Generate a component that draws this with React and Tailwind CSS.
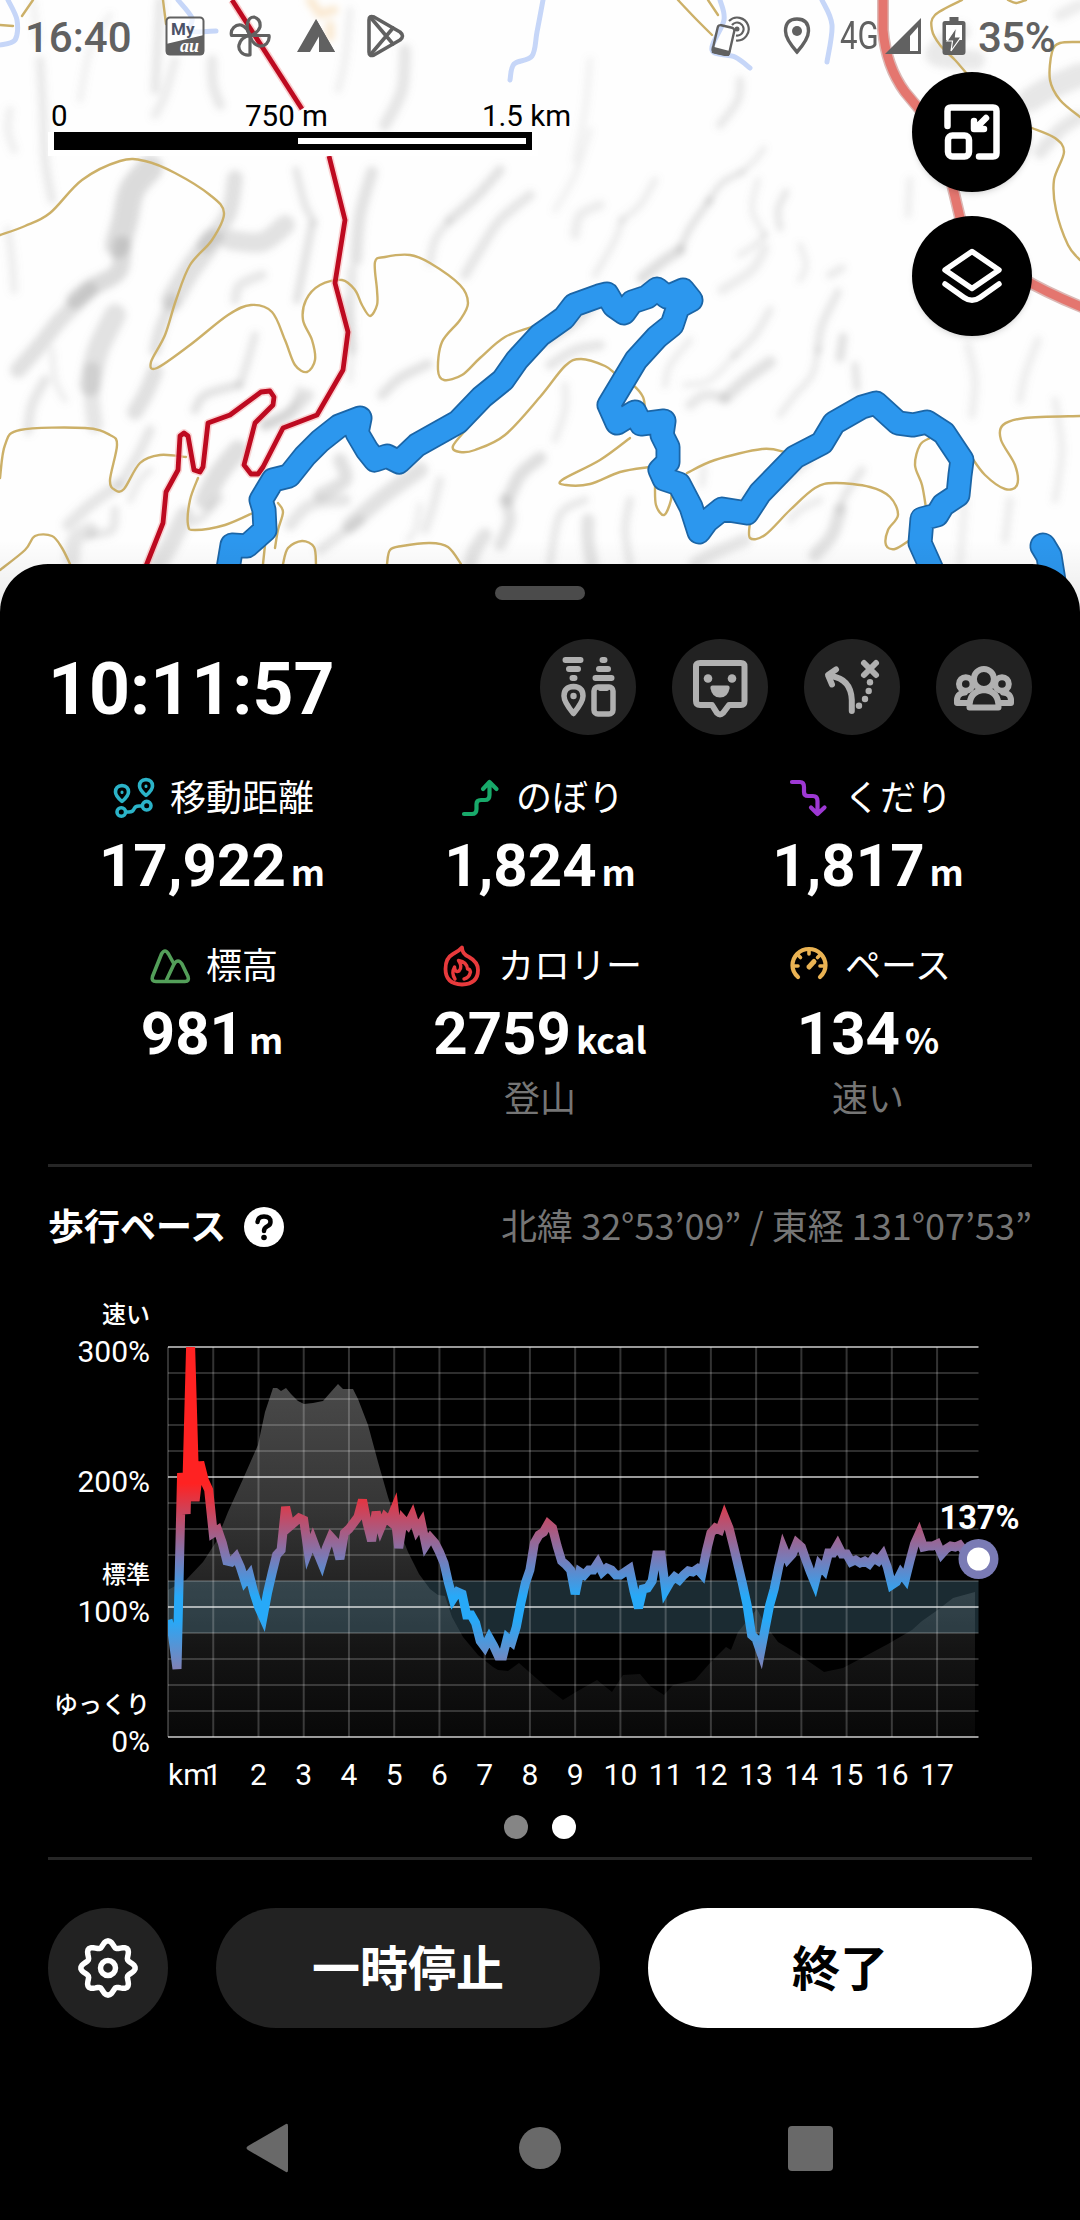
import { useId } from "react";

const CONTOURS = [
  "0,235 25,226 50,213 82,180 120,161 145,161 175,173 210,195 224,213 212,240 190,265 176,300 165,335 151,362 157,368 190,345 228,315 251,305 272,312 285,340 295,365 307,372 315,360 312,340 303,320 306,300 320,285 342,280 355,290 362,305 370,316 377,305 377,290 375,262 385,257 410,255 430,263 460,285 468,303 460,320 442,342 438,370 444,380 462,375 480,358 505,337 535,326",
  "0,478 5,445 20,430 85,428 110,435 117,445 110,480 115,490 124,489 140,463 160,455 186,457",
  "198,478 190,500 188,525 195,530 225,525 255,512",
  "278,503 283,512 278,530 275,548",
  "0,570 25,550 35,536 52,536 62,548 70,564",
  "265,545 263,564",
  "283,564 288,548 302,541 314,547 316,564",
  "387,564 390,550 402,546 430,543 448,547 461,564",
  "490,400 470,425 453,446 460,452 475,450 505,435 540,397 565,366 581,359 605,366 617,375 633,385 643,397 645,410",
  "630,438 600,460 562,480 566,485 590,484 620,472 650,467",
  "655,485 656,505 664,515 671,500 671,488",
  "687,473 715,460 762,449 785,452",
  "750,522 750,538 765,535 790,510 815,488 835,483 870,487 890,497 898,515 888,530 886,545 895,549 910,540",
  "930,438 920,445 915,465 922,485 926,508",
  "970,455 985,475 1005,489 1017,485 1015,465 1001,440 1003,425 1025,418 1080,416",
  "678,0 695,18 712,35",
  "708,0 718,15",
  "962,0 935,15 932,30 940,45 955,60 967,74",
  "1008,0 1016,3 1026,0",
  "1080,42 1060,43 1052,52 1050,80 1060,100 1080,117",
  "1032,128 1055,138 1064,152 1054,180 1056,210 1068,245 1080,260",
  "163,0 166,24",
  "33,0 22,16",
  "0,25 13,26",
];

const RIVERS = [
  "8,0 17,20 15,40 0,45",
  "178,0 192,18 190,31 216,31",
  "543,0 537,32 532,56 514,64 510,80",
  "720,0 724,20 712,50 735,57 750,68",
  "822,0 832,25 827,62",
];

// hill shade strokes: [width, opacity, points]
const SHADES = [
  [26, 0.3, "150,168 132,190 125,220 118,245"],
  [18, 0.3, "122,245 118,272 90,288 75,300"],
  [16, 0.26, "235,178 228,215 205,245"],
  [22, 0.26, "212,240 190,270 172,300"],
  [12, 0.24, "172,300 160,330 155,350"],
  [20, 0.24, "285,225 262,242 230,240"],
  [10, 0.2, "262,275 240,285 235,300"],
  [12, 0.24, "372,172 360,215 356,260"],
  [10, 0.2, "352,270 350,320 352,350"],
  [7, 0.24, "296,170 305,205 314,222"],
  [8, 0.26, "312,225 306,255 297,300"],
  [10, 0.24, "500,170 478,195 450,220"],
  [8, 0.2, "448,222 435,240 430,262"],
  [10, 0.22, "530,195 500,220 480,250 465,275"],
  [9, 0.2, "160,0 158,40 155,90"],
  [9, 0.16, "175,60 165,95 155,115"],
  [10, 0.2, "212,60 213,85 220,105"],
  [12, 0.22, "405,50 402,90 385,125"],
  [7, 0.14, "350,10 345,60 338,90"],
  [9, 0.18, "40,60 43,110 45,160 52,200"],
  [6, 0.14, "33,0 38,40"],
  [8, 0.14, "10,110 8,130 14,150"],
  [8, 0.15, "8,230 12,260 14,290"],
  [6, 0.14, "110,15 90,50 80,100"],
  [16, 0.26, "90,290 60,320 40,345 18,370"],
  [22, 0.25, "115,315 98,350 90,385"],
  [16, 0.22, "92,370 92,400 95,425"],
  [10, 0.22, "45,380 32,405 28,430"],
  [6, 0.16, "52,350 55,380 65,400"],
  [16, 0.26, "155,372 145,395 135,412"],
  [8, 0.22, "255,335 248,360 240,385"],
  [9, 0.24, "238,385 205,395 195,410"],
  [8, 0.2, "300,390 290,410 265,425"],
  [10, 0.22, "150,430 138,455 120,485"],
  [12, 0.22, "118,485 90,505 68,525"],
  [9, 0.2, "115,510 112,530 90,535"],
  [7, 0.18, "150,470 140,480 130,500"],
  [16, 0.22, "90,530 75,540 72,560"],
  [18, 0.24, "185,515 170,545 158,564"],
  [20, 0.28, "238,450 218,475 205,500"],
  [8, 0.22, "220,498 205,515 195,522"],
  [12, 0.24, "308,395 288,415 265,425"],
  [10, 0.24, "428,364 400,378 382,395"],
  [6, 0.16, "345,300 352,340 350,380"],
  [14, 0.26, "340,460 345,480 320,495"],
  [16, 0.25, "420,470 385,495 350,525"],
  [12, 0.22, "345,500 310,505 290,525"],
  [10, 0.22, "360,520 340,535 320,550"],
  [9, 0.18, "440,480 432,510 425,530"],
  [6, 0.16, "420,505 415,530 408,540"],
  [13, 0.28, "540,458 520,475 508,500"],
  [12, 0.24, "505,500 510,520 500,545"],
  [14, 0.24, "485,535 475,550 470,564"],
  [14, 0.24, "595,300 575,320 545,340"],
  [10, 0.22, "600,345 575,350 550,365"],
  [11, 0.28, "642,278 662,262 680,250"],
  [7, 0.26, "680,250 690,228 710,200"],
  [6, 0.24, "708,202 722,183 742,172"],
  [5, 0.2, "742,172 755,160 764,148"],
  [10, 0.16, "575,235 580,215 600,205"],
  [7, 0.17, "595,275 615,240 622,220"],
  [7, 0.16, "622,220 640,205 655,180"],
  [6, 0.13, "555,210 575,175 590,130"],
  [6, 0.12, "590,60 585,110 575,160"],
  [8, 0.2, "740,80 738,100 720,125"],
  [6, 0.16, "758,180 752,210 765,235"],
  [7, 0.22, "786,192 778,210 780,228"],
  [6, 0.18, "765,235 755,245 740,255"],
  [10, 0.16, "765,248 752,270 722,290"],
  [6, 0.17, "800,245 806,265 800,280"],
  [12, 0.24, "770,362 745,380 725,398"],
  [10, 0.2, "725,398 705,395 690,405"],
  [8, 0.22, "838,292 822,325 818,350"],
  [6, 0.2, "818,350 812,375 795,395 780,415"],
  [9, 0.26, "843,337 840,358"],
  [7, 0.24, "855,365 857,388"],
  [8, 0.18, "770,310 755,335 735,355"],
  [6, 0.17, "735,355 710,380 685,385"],
  [7, 0.16, "690,340 670,365 665,385"],
  [7, 0.17, "565,385 565,410 555,440"],
  [8, 0.22, "862,470 845,495 840,510"],
  [13, 0.26, "840,510 832,535 815,555"],
  [7, 0.18, "820,500 800,510 790,520"],
  [6, 0.18, "704,468 702,485"],
  [10, 0.2, "808,460 775,485 745,500"],
  [13, 0.22, "745,540 710,555 695,564"],
  [13, 0.24, "588,520 588,540 592,564"],
  [8, 0.2, "585,500 560,515 550,564"],
  [8, 0.2, "630,500 625,530 630,564"],
  [8, 0.15, "968,345 975,380 972,415"],
  [8, 0.15, "1038,340 1025,375 1020,400"],
  [7, 0.16, "1055,400 1062,450 1055,500"],
  [8, 0.16, "1010,500 1005,540"],
  [8, 0.14, "965,500 960,564"],
  [7, 0.15, "910,180 908,215"],
  [8, 0.18, "842,268 830,275"],
  [24, 0.2, "1080,75 1050,88 1030,100"],
  [20, 0.18, "960,32 935,55 975,60"],
  [14, 0.2, "1078,118 1060,130 1040,152"],
  [12, 0.16, "1080,5 1060,15"],
];

const TRAIL_TOP = "232,0 302,109";
const TRAIL =
  "329,156 345,220 335,283 348,332 343,370 317,415 283,428 263,467 258,474 251,474 244,465 255,423 273,405 274,397 270,391 261,392 230,415 208,423 203,467 200,472 194,470 188,436 184,433 180,436 178,470 166,492 163,523 146,566";

const TRACK =
  "227,575 232,545 247,546 265,530 264,510 261,500 273,480 289,476 305,456 320,441 339,426 360,418 357,433 367,450 375,460 387,456 399,462 417,445 458,422 482,397 503,380 517,360 540,335 550,328 564,318 574,305 599,296 607,294 614,306 624,313 632,302 647,297 657,289 667,297 683,290 691,300 678,307 672,325 657,337 636,360 609,405 617,423 635,412 641,424 664,421 662,435 668,447 668,462 660,470 664,479 679,484 691,507 699,532 707,521 722,509 747,513 760,493 795,457 822,443 834,423 862,407 876,403 898,423 913,425 927,422 944,433 962,460 960,475 958,495 943,505 937,515 922,519 920,543 933,572";

// heights above the 0% line, one sample per 0.1 km (130 units = 100%)
const PACE = [
  117, 102, 68, 264, 223, 391, 236, 275, 257, 247, 204, 207, 194, 176, 175, 180, 170, 156, 162, 144, 130, 120, 144, 164,
  182, 187, 230, 211, 215, 219, 217, 185, 197, 185, 174, 189, 200, 195, 178, 204, 208, 214, 220, 237, 214, 196, 225, 209,
  220, 216, 227, 189, 217, 212, 221, 207, 214, 192, 199, 194, 185, 174, 154, 138, 145, 143, 122, 122, 114, 96, 90, 99, 91,
  81, 81, 99, 95, 110, 134, 154, 167, 194, 202, 205, 213, 209, 191, 176, 172, 167, 143, 165, 162, 167, 167, 174, 165, 169,
  167, 162, 162, 165, 168, 146, 129, 148, 149, 156, 182, 182, 147, 155, 160, 157, 162, 166, 165, 168, 163, 186, 204, 209,
  207, 220, 209, 191, 172, 153, 132, 102, 98, 85, 109, 132, 148, 170, 189, 178, 183, 194, 190, 177, 165, 154, 172, 167,
  184, 184, 192, 183, 183, 175, 177, 174, 176, 173, 179, 176, 182, 170, 152, 155, 164, 158, 176, 193, 203, 190, 191, 191,
  193, 183, 188, 191, 190, 192, 186, 182, 180, 178,
];

const ELEVATION =
  "0,147 18,157 35,175 48,195 60,225 75,258 90,292 97,325 105,349 109,349 113,346 118,349 123,343 130,336 136,333 145,334 155,336 162,344 170,353 175,348 185,348 190,338 200,312 210,275 220,240 230,210 240,185 251,163 262,148 270,142 277,141 284,120 295,100 310,82 325,70 330,67 340,66 351,74 368,59 381,48 395,37 408,45 429,57 444,45 455,62 472,63 482,51 496,42 505,52 527,57 542,74 558,90 563,87 570,105 589,128 596,114 610,95 630,83 656,65 675,69 692,78 720,93 744,107 754,116 771,128 785,139 807,145";

const PLOT = { left: 120, top: 57, width: 810.5, height: 390, km: 45.24 };
const BASE = PLOT.top + PLOT.height;

// Catmull-Rom spline through the given points
const smooth = (points) => {
  const p = points.split(" ").map((s) => s.split(",").map(Number));
  let d = `M${p[0]}`;
  for (let i = 0; i < p.length - 1; i++) {
    const a = p[i - 1] || p[i];
    const b = p[i];
    const c = p[i + 1];
    const e = p[i + 2] || c;
    d += `C${b[0] + (c[0] - a[0]) / 6},${b[1] + (c[1] - a[1]) / 6} ${c[0] - (e[0] - b[0]) / 6},${c[1] - (e[1] - b[1]) / 6} ${c}`;
  }
  return d;
};

const ROAD = "M883 -4V30Q886 66 905 92L930 122M951 180L962 226M1020 277Q1045 292 1084 308";

const MapView = () => (
  <svg viewBox="0 0 1080 620" className="absolute inset-0 h-[620px] w-[1080px] bg-[#fefefe]">
    <defs>
      <filter id="shade" filterUnits="userSpaceOnUse" x="-20" y="-20" width="1120" height="660">
        <feGaussianBlur stdDeviation="3.6" />
      </filter>
      <linearGradient id="edge" x1="0" x2="0" y1="0" y2="1">
        <stop offset="0" stopColor="#000" stopOpacity="0" />
        <stop offset="1" stopColor="#000" stopOpacity="0.09" />
      </linearGradient>
    </defs>
    <g fill="none" strokeLinecap="round" strokeLinejoin="round">
      <g filter="url(#shade)">
        {SHADES.map(([width, opacity, points]) => (
          <path key={points} d={smooth(points)} stroke="#8c8c8c" strokeWidth={width} strokeOpacity={opacity} />
        ))}
        <path d="M310 0l10 14 14-4M330 25v12" stroke="#f8dfbd" strokeWidth="9" strokeOpacity="0.7" />
      </g>
      {RIVERS.map((points) => (
        <path key={points} d={smooth(points)} stroke="#c6d6f8" strokeWidth="5" />
      ))}
      {CONTOURS.map((points) => (
        <path key={points} d={smooth(points)} stroke="#ccb068" strokeWidth="2.4" />
      ))}
      {/* Main road */}
      <path d={ROAD} stroke="#b9716c" strokeWidth="12" strokeLinecap="butt" strokeOpacity="0.5" />
      <path d={ROAD} stroke="#e4766f" strokeWidth="9" strokeLinecap="butt" />
      {/* Hiking trail */}
      <g strokeLinecap="butt">
        <polyline points={TRAIL_TOP} stroke="#f6b9b9" strokeWidth="8" strokeOpacity="0.7" />
        <polyline points={TRAIL} stroke="#f6b9b9" strokeWidth="8" strokeOpacity="0.6" />
        <polyline points={TRAIL_TOP} stroke="#bd0a20" strokeWidth="4.8" />
        <polyline points={TRAIL} stroke="#bd0a20" strokeWidth="4.8" />
      </g>
      {/* Recorded track */}
      <polyline points={TRACK} stroke="#1b65a6" strokeWidth="25" />
      <polyline points="1043,546 1049,556 1056,600" stroke="#1b65a6" strokeWidth="27" />
      <polyline points={TRACK} stroke="#2c97ee" strokeWidth="21.5" />
      <polyline points="1043,546 1049,556 1056,600" stroke="#2c97ee" strokeWidth="23.5" />
    </g>
    <rect y="540" width="1080" height="80" fill="url(#edge)" />
  </svg>
);

const MyAuIcon = () => (
  <svg viewBox="0 0 40 40" className="h-10 w-10">
    <rect x="1.5" y="1.5" width="37" height="37" rx="3.5" fill="#fff" fillOpacity="0.7" stroke="#616161" strokeWidth="2" />
    <path d="M1 28L39 19V36Q39 39 36 39H4Q1 39 1 36Z" fill="#616161" />
    <text x="6" y="19" fontSize="17" fontWeight="700" fill="#4d5368" fontFamily="Roboto, sans-serif">My</text>
    <text x="15" y="36" fontSize="18" fontWeight="700" fontStyle="italic" fill="#fff" fontFamily="Liberation Serif, serif">au</text>
  </svg>
);

const FanIcon = () => (
  <svg viewBox="0 0 42 42" className="h-[42px] w-[42px]" fill="none" stroke="#616161" strokeWidth="3.2" strokeLinejoin="round">
    <path d="M21 20.5C16 13 18 2 25 2Q32 4 31 12Q29 18 21 20.5Z" />
    <path d="M21 20.5H2.500C1 14 7 9 12 10Q18 12 21 20.5Z" />
    <path d="M21 20.500V40C13 41 9 35 10 30Q12 22 21 20.500Z" />
    <path d="M21 20.500H40C41 27 36 32 30 31Q23 29 21 20.500Z" />
  </svg>
);

const PlayIcon = () => (
  <svg viewBox="0 0 40 44" className="h-11 w-10" fill="none" stroke="#616161" strokeWidth="3.600" strokeLinejoin="round" strokeLinecap="round">
    <path d="M3 6Q3 1 8 3L34 18Q39 22 34 26L8 41Q3 43 3 38Z" />
    <path d="M5 4L27 30M5 40L27 14" />
  </svg>
);

const StatusBar = () => (
  <div className="absolute inset-x-0 top-0 flex h-[72px] items-center pl-[25px] pr-[24px] font-['Roboto',sans-serif] text-[#616161]">
    <span className="w-[140px] pt-[3px] text-[42px] leading-none font-medium">16:40</span>
    <MyAuIcon />
    <div className="ml-[24px]"><FanIcon /></div>
    <svg viewBox="0 0 40 36" className="ml-[25px] h-9 w-10">
      <path d="M20 1L39 34H25V15L14 34H1Z" fill="#616161" />
      <path d="M20 1L39 34H23V14Z" fill="#616161" />
    </svg>
    <div className="ml-[30px]"><PlayIcon /></div>
    <div className="ml-auto flex items-center">
      <svg viewBox="0 0 40 40" className="mr-[33px] h-10 w-10" fill="none" stroke="#616161" strokeWidth="2.400">
        <rect x="5" y="10" width="17" height="28" rx="3" transform="rotate(13 13 24)" />
        <path d="M3 32L19 36L18 39L3 36Z" fill="#616161" />
        <circle cx="27" cy="13" r="2.500" fill="#616161" stroke="none" />
        <path d="M22 9A6.500 6.500 0 1 1 26 19.500M19 5A11.500 11.500 0 1 1 26 24.500" strokeWidth="2.200" />
      </svg>
      <svg viewBox="0 0 28 38" className="mr-[29px] h-[38px] w-7">
        <path d="M14 2Q25.500 2 25.500 14Q25.500 22 14 35Q2.500 22 2.500 14Q2.500 2 14 2Z" fill="none" stroke="#616161" strokeWidth="3.400" />
        <circle cx="14" cy="14" r="5" fill="#616161" />
      </svg>
      <span className="mr-[6px] w-[38px] origin-left scale-x-[0.82] text-[38px] leading-none whitespace-nowrap">4G</span>
      <svg viewBox="0 0 38 38" className="mr-[20px] h-[38px] w-[38px]">
        <path d="M1 37L37 1V37Z" fill="#616161" />
        <path d="M26 19L34 10V34H26Z" fill="#fff" />
      </svg>
      <svg viewBox="0 0 24 40" className="mr-[12px] h-10 w-6">
        <path d="M7.500 1H16.500V5H21Q23.500 5 23.500 7.500V36Q23.500 39 20.500 39H3.500Q0.500 39 0.500 36V7.500Q0.500 5 3 5H7.500Z" fill="#616161" />
        <path d="M4 9H20V24H4Z" fill="#fff" />
        <path d="M14.500 11L5 25H10.500L9 35L19 21H13.500Z" fill="#616161" stroke="#fff" strokeWidth="1.200" />
      </svg>
      <span className="w-[78px] origin-left pt-[3px] text-[42px] leading-none font-medium tracking-[-0.5px] whitespace-nowrap">35%</span>
    </div>
  </div>
);

const ScaleBar = () => (
  <div className="absolute left-[48px] top-[98px] w-[540px] font-['Roboto',sans-serif] text-[29.500px] leading-[36px] text-black">
    <div className="flex h-[34px] [text-shadow:0_0_4px_#fff]">
      <span className="w-[197px] pl-[3px]">0</span>
      <span className="w-[237px]">750 m</span>
      <span>1.5 km</span>
    </div>
    <div className="w-[490px] bg-white pb-1.5 pl-1.5">
      <div className="flex h-[18px] w-[478px] bg-black py-[6px] pr-[6px] pl-[244px]">
        <div className="flex-1 bg-white" />
      </div>
    </div>
  </div>
);

const MapButtons = () => (
  <div className="absolute right-[48px] top-[72px] flex flex-col gap-6">
    <button className="flex h-[120px] w-[120px] items-center justify-center rounded-full bg-black shadow-md">
      <svg viewBox="0 0 60 60" className="h-[60px] w-[60px]" fill="none" stroke="#fff" strokeWidth="6.500" strokeLinecap="round" strokeLinejoin="round">
        <path d="M5.500 24V9Q5.500 5.500 9 5.500H51Q54.500 5.500 54.500 9V51Q54.500 54.500 51 54.500H37" />
        <rect x="6" y="33.500" width="21" height="21" rx="4.500" />
        <path d="M44 16L35 25M32 19V27H42" strokeWidth="6.500" />
      </svg>
    </button>
    <button className="flex h-[120px] w-[120px] items-center justify-center rounded-full bg-black shadow-md">
      <svg viewBox="0 0 60 60" className="h-[60px] w-[60px]" fill="none" stroke="#fff" strokeWidth="5.500" strokeLinecap="round" strokeLinejoin="round">
        <path d="M30 5.500L57 24L30 42.500L3 24Z" />
        <path d="M3 38L22 51.500Q30 57 38 51.500L57 38" />
      </svg>
    </button>
  </div>
);

const RoundAction = ({ children }) => (
  <button className="h-24 w-24 rounded-full bg-[#222]">
    <svg viewBox="0 0 96 96" className="h-24 w-24" fill="none" stroke="#b0b0b0" strokeWidth="6" strokeLinecap="round" strokeLinejoin="round">
      {children}
    </svg>
  </button>
);

const Actions = () => (
  <div className="flex gap-9">
    <RoundAction>
      <path d="M25.500 21H40.500M29 30H38M32.500 39H34.500M62.500 21H64.500M59 30H68M55.500 39H71.500" />
      <path d="M33.500 47.500Q43 48 43 57Q43 63 33.500 74.500Q24 63 24 57Q24 48 33.500 47.500Z" strokeWidth="5.500" />
      <circle cx="33.500" cy="57" r="3.200" fill="#b0b0b0" stroke="none" />
      <rect x="54" y="48" width="19" height="27" rx="4" strokeWidth="5.500" />
      <path d="M60 50H67" strokeWidth="4" />
    </RoundAction>
    <RoundAction>
      <path d="M28 24H69Q72.500 24 72.500 27.500V62Q72.500 66 69 66H57L51 74Q48 77 45 74L40 66H28Q24 66 24 62V27.500Q24 24 28 24Z" />
      <circle cx="36" cy="39.500" r="4.300" fill="#b0b0b0" stroke="none" />
      <circle cx="60" cy="39.500" r="4.300" fill="#b0b0b0" stroke="none" />
      <path d="M40.500 46.500H55.500Q58 46.500 57.500 49.500Q56 58.500 48 58.500Q40 58.500 38.500 49.500Q38 46.500 40.500 46.500Z" fill="#b0b0b0" stroke="none" />
    </RoundAction>
    <RoundAction>
      <path d="M47.800 72V61Q47 40 27 37" />
      <path d="M32 30.500L24 36L28 45.500" />
      <path d="M60 24L72 36M72 24L60 36" />
      <g fill="#b0b0b0" stroke="none">
        <circle cx="66" cy="43.300" r="3.200" />
        <circle cx="64.700" cy="52" r="3.200" />
        <circle cx="61" cy="60" r="3.200" />
        <circle cx="55" cy="66.700" r="3.200" />
      </g>
    </RoundAction>
    <RoundAction>
      <circle cx="29.800" cy="45" r="6.800" />
      <circle cx="66" cy="45" r="6.800" />
      <path d="M32 64H21Q20 54 29 53.500M64 64H75Q76 54 67 53.500" />
      <circle cx="47.900" cy="40" r="10" />
      <path d="M33.500 68.500Q33 52 48 51Q63 52 62.500 68.500Z" fill="#222" />
    </RoundAction>
  </div>
);

const DistanceIcon = () => (
  <g stroke="#2bb3c8" strokeWidth="3.600">
    <path d="M12 11.500Q18.500 12 18.500 18Q18.500 22 12 27.500Q5.500 22 5.500 18Q5.500 12 12 11.500Z" />
    <path d="M36 5.500Q42.500 6 42.500 12Q42.500 16 36 21.500Q29.500 16 29.500 12Q29.500 6 36 5.500Z" />
    <path d="M12 18v.5M36 12v.5" strokeWidth="3" />
    <circle cx="11.300" cy="38" r="4.300" />
    <circle cx="36.700" cy="31.700" r="4.300" />
    <path d="M16 38H19Q23 38 24 35Q25 32 29 32H32" />
  </g>
);

const AscentIcon = () => (
  <path d="M8 40H16Q20.500 40 20.500 35V30Q20.500 26 25 26H29Q33.500 26 33.500 21V8M27 15L33.500 8L40.500 15" stroke="#18a96a" strokeWidth="4.200" />
);

const DescentIcon = () => (
  <path d="M8 8H16Q20 8 20 13V18Q20 22 24 22H29Q33.500 22 33.500 27V40M27 33.500L33.500 40L40.500 33.500" stroke="#9d38d3" strokeWidth="4.200" />
);

const MountainIcon = () => (
  <g stroke="#539f59" strokeWidth="3.600">
    <path d="M15.500 12Q19 6 22.500 12L28 22Q32 16 36 22L42 34.500Q43.500 39.500 39 39.500H10Q5 39.500 6.500 34.500Z" />
    <path d="M28 22L20.500 38" />
  </g>
);

const FlameIcon = () => (
  <g stroke="#e83a3c" strokeWidth="3.800">
    <path d="M24 5.500Q24 12 31 15Q40 20 40 28Q40 42 24 42.500Q7.500 42 7.500 27Q7.500 16 15 12Q21 9 24 5.500Z" />
    <path d="M17 37Q13 31 16.500 25Q17 31 21 29Q25 25 20.500 18.500Q29 20 29.500 27Q32 27 32.500 30Q31 36 26 37" strokeWidth="3.400" />
  </g>
);

const GaugeIcon = () => (
  <g stroke="#eab353" strokeWidth="4.200">
    <path d="M13 35Q7.500 30 7.500 23.500A16.500 16.500 0 0 1 40.500 23.500Q40.500 30 35 35" />
    <path d="M9 24H13M35 24H39M13 13L15.500 15.500M35 13L32.500 15.500M24 8V12" strokeWidth="3.600" />
    <path d="M24 25L29 19.500" strokeWidth="5" />
  </g>
);

const STATS = [
  { icon: DistanceIcon, label: "移動距離", value: "17,922", unit: "m" },
  { icon: AscentIcon, label: "のぼり", value: "1,824", unit: "m" },
  { icon: DescentIcon, label: "くだり", value: "1,817", unit: "m" },
  { icon: MountainIcon, label: "標高", value: "981", unit: "m" },
  { icon: FlameIcon, label: "カロリー", value: "2759", unit: "kcal", note: "登山" },
  { icon: GaugeIcon, label: "ペース", value: "134", unit: "%", note: "速い" },
];

const Stat = ({ icon: Icon, label, value, unit, note }) => (
  <div className="flex flex-col items-center">
    <div className="flex h-12 items-center gap-3">
      <svg viewBox="0 0 48 48" className="h-12 w-12" fill="none" strokeLinecap="round" strokeLinejoin="round">
        <Icon />
      </svg>
      <span className="pb-[6px] text-[36px] leading-[42px]">{label}</span>
    </div>
    <div className="mt-[9px] flex h-[70px] items-baseline gap-[5px] leading-[70px]">
      <span className="font-['Roboto',sans-serif] text-[60px] font-bold">{value}</span>
      <span className="text-[35.500px] font-bold">{unit}</span>
    </div>
    {note && <div className="mt-[3px] text-[36px] leading-[48px] text-[#757575]">{note}</div>}
  </div>
);

const PaceChart = () => {
  const id = useId();
  const right = PLOT.left + PLOT.width;
  const pacePoints = PACE.map((h, i) => `${(PLOT.left + (i * PLOT.km) / 10).toFixed(1)},${BASE - h}`).join(" ");
  const hills = ELEVATION.split(" ").map((p) => {
    const [x, h] = p.split(",").map(Number);
    return `${PLOT.left + x},${BASE - h}`;
  });

  return (
    <svg viewBox="0 0 984 510" className="h-[510px] w-[984px] overflow-visible">
      <defs>
        <linearGradient id={`${id}hill`} gradientUnits="userSpaceOnUse" x1="0" x2="0" y1="90" y2="447">
          <stop offset="0" stopColor="#4a4a4a" />
          <stop offset="0.35" stopColor="#363636" />
          <stop offset="0.75" stopColor="#151515" />
          <stop offset="1" stopColor="#080808" />
        </linearGradient>
        <linearGradient id={`${id}pace`} gradientUnits="userSpaceOnUse" x1="0" x2="0" y1="57" y2="447">
          <stop offset="0.35" stopColor="#ff2222" />
          <stop offset="0.54" stopColor="#7a7ab6" />
          <stop offset="0.64" stopColor="#27a9f8" />
          <stop offset="0.7" stopColor="#27a9f8" />
          <stop offset="0.84" stopColor="#8a7cae" />
        </linearGradient>
        <clipPath id={`${id}clip`}>
          <rect x={PLOT.left} y={PLOT.top} width={PLOT.width} height={PLOT.height} />
        </clipPath>
      </defs>

      <polygon
        points={`${PLOT.left},${BASE} ${hills.join(" ")} ${PLOT.left + 807},${BASE}`}
        fill={`url(#${id}hill)`}
      />
      {/* Standard pace band */}
      <rect x={PLOT.left} y={BASE - 156} width={PLOT.width} height="52" fill="#64a0b9" fillOpacity="0.27" />

      {Array.from({ length: 18 }, (_, i) => (
        <line key={i} x1={PLOT.left + i * PLOT.km} x2={PLOT.left + i * PLOT.km} y1={PLOT.top} y2={BASE} stroke="#fff" strokeOpacity="0.2" strokeWidth="2" />
      ))}
      {Array.from({ length: 16 }, (_, i) => (
        <line
          key={i}
          x1={PLOT.left}
          x2={right}
          y1={PLOT.top + i * 26}
          y2={PLOT.top + i * 26}
          stroke="#fff"
          strokeOpacity={i % 5 === 0 ? 0.6 : 0.18}
          strokeWidth="2"
        />
      ))}

      <polyline
        points={pacePoints}
        fill="none"
        stroke={`url(#${id}pace)`}
        strokeWidth="9"
        clipPath={`url(#${id}clip)`}
      />
      <circle cx="930.500" cy="269" r="20" fill="#7a7bb5" />
      <circle cx="930.500" cy="269" r="11.500" fill="#fff" />
      <text x="931.500" y="238.500" textAnchor="middle" fill="#fff" fontFamily="Roboto, sans-serif" fontSize="32.500" fontWeight="700">137%</text>

      <g fill="#fff" textAnchor="end" fontFamily="Noto Sans CJK JP, sans-serif" fontSize="24" fontWeight="500">
        <text x="102" y="33">速い</text>
        <text x="102" y="293">標準</text>
        <text x="102" y="423">ゆっくり</text>
      </g>
      <g fill="#fff" textAnchor="end" fontFamily="Roboto, sans-serif" fontSize="30">
        <text x="102" y="72">300%</text>
        <text x="102" y="202">200%</text>
        <text x="102" y="332">100%</text>
        <text x="102" y="462">0%</text>
      </g>
      <g fill="#fff" textAnchor="middle" fontFamily="Roboto, sans-serif" fontSize="30">
        <text x="120" y="495" textAnchor="start">km</text>
        {Array.from({ length: 17 }, (_, i) => (
          <text key={i} x={PLOT.left + (i + 1) * PLOT.km} y="495">{i + 1}</text>
        ))}
      </g>
    </svg>
  );
};

const gearPath = () => {
  const points = [];
  for (let a = 0; a <= 360; a += 4) {
    const rad = (a * Math.PI) / 180;
    const r = 24.2 + 3 * Math.cos(8 * rad);
    points.push(`${(30 + r * Math.sin(rad)).toFixed(2)},${(30 - r * Math.cos(rad)).toFixed(2)}`);
  }
  return points.join(" ");
};

const Controls = () => (
  <div className="flex gap-12 text-[48px] font-bold">
    <button className="flex h-[120px] w-[120px] items-center justify-center rounded-full bg-[#222]">
      <svg viewBox="0 0 60 60" className="h-[60px] w-[60px]" fill="none" stroke="#fff" strokeWidth="5.500" strokeLinejoin="round">
        <polygon points={gearPath()} />
        <circle cx="30" cy="30" r="7.500" />
      </svg>
    </button>
    <button className="h-[120px] flex-1 rounded-full bg-[#222] pb-1.5">一時停止</button>
    <button className="h-[120px] flex-1 rounded-full bg-white pb-1.5 text-black">終了</button>
  </div>
);

const NavBar = () => (
  <div className="flex h-[144px] items-center justify-center">
    <div className="flex w-[270px] justify-center pr-[6px]">
      <svg viewBox="0 0 44 50" className="h-[50px] w-11">
        <path d="M41 1Q43 0 43 3V47Q43 50 41 49L3 27Q0 25 3 23Z" fill="#696969" />
      </svg>
    </div>
    <div className="flex w-[270px] justify-center">
      <div className="h-[42px] w-[42px] rounded-full bg-[#696969]" />
    </div>
    <div className="flex w-[270px] justify-center">
      <div className="h-[45px] w-[45px] rounded bg-[#696969]" />
    </div>
  </div>
);

export default function App() {
  return (
    <div className="flex h-[2220px] w-[1080px] flex-col overflow-hidden bg-black font-['Noto_Sans_CJK_JP',sans-serif] text-white">
      <div className="relative h-[564px] shrink-0">
        <MapView />
        <StatusBar />
        <ScaleBar />
        <MapButtons />
      </div>

      <div className="relative flex flex-1 flex-col rounded-t-[48px] bg-black">
        <div className="mx-auto mt-[22px] h-[14px] w-[90px] rounded-full bg-[#4b4b4b]" />

        <div className="flex flex-col px-12">
          <div className="mt-[39px] flex h-24 items-center justify-between">
            <span className="pt-[6px] font-['Roboto',sans-serif] text-[71.500px] leading-none font-bold">10:11:57</span>
            <Actions />
          </div>

          <div className="mt-[39px] grid h-[345px] grid-cols-3 grid-rows-[168px_177px]">
            {STATS.map((stat) => (
              <Stat key={stat.label} {...stat} />
            ))}
          </div>

          <div className="mt-[45px] h-[3px] bg-[#262626]" />

          <div className="mt-[36px] flex h-12 items-center justify-between text-[36px] leading-[42px]">
            <div className="flex items-center gap-3.5">
              <span className="pb-[6px] font-bold">歩行ペース</span>
              <svg viewBox="0 0 48 48" className="h-12 w-12" fill="none" strokeLinecap="round" strokeLinejoin="round">
                <circle cx="24" cy="24" r="20" fill="#fff" />
                <path d="M17.500 19Q18 13.500 24 13.500Q30.500 13.500 30.500 19Q30.500 22 27 23.500Q24 25 24 28" stroke="#000" strokeWidth="4.500" />
                <circle cx="24" cy="34.500" r="2.800" fill="#000" />
              </svg>
            </div>
            <span className="pb-[6px] text-[#757575]">北緯 32°53’09” / 東経 131°07’53”</span>
          </div>

          <div className="mt-[39px]">
            <PaceChart />
          </div>

          <div className="mt-[15px] flex justify-center gap-6">
            <div className="h-6 w-6 rounded-full bg-[#858585]" />
            <div className="h-6 w-6 rounded-full bg-white" />
          </div>

          <div className="mt-[18px] mb-12 h-[3px] bg-[#262626]" />
          <Controls />
        </div>

        <div className="mt-auto">
          <NavBar />
        </div>
      </div>
    </div>
  );
}
